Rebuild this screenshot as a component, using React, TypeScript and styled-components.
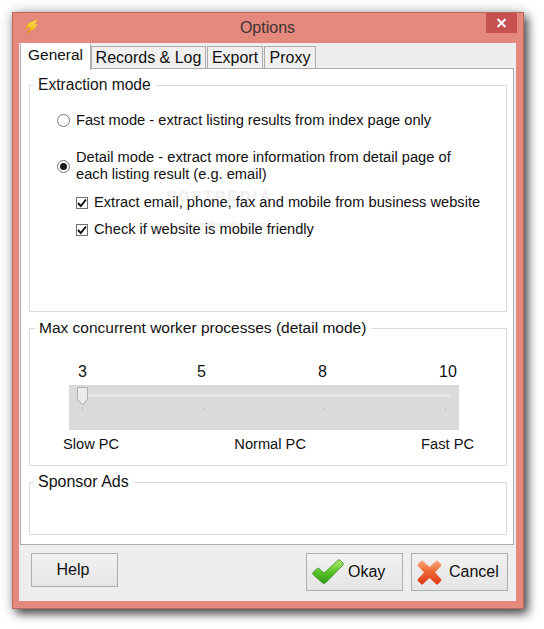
import React from 'react'
import styled, { createGlobalStyle } from 'styled-components'

const GlobalStyle = createGlobalStyle`
  html, body {
    margin: 0;
    padding: 0;
    background: #ffffff;
    overflow: hidden;
  }
  body {
    font-family: "Liberation Sans", Arial, sans-serif;
    font-size: 14.67px;
    color: #111111;
  }
`

const Desktop = styled.div`
  width: 544px;
  height: 629px;
  padding: 12px 0 0 12px;
  box-sizing: border-box;
`

const Window = styled.div`
  width: 512px;
  height: 597px;
  box-sizing: border-box;
  display: flex;
  flex-direction: column;
  padding: 0 7px 7px 6px;
  background: #e5887e;
  border: 1px solid #b9685f;
  box-shadow: 4px 5px 9px rgba(0, 0, 0, 0.65), 0 0 12px rgba(0, 0, 0, 0.25);
`

const TitleBar = styled.div`
  height: 30px;
  flex: none;
  display: grid;
  grid-template-columns: 1fr auto 1fr;
  align-items: start;
`

const AppIcon = styled.svg`
  width: 14px;
  height: 15px;
  margin: 6px 0 0 6px;
`

const Title = styled.div`
  font-size: 16px;
  line-height: 30px;
  color: #3f3431;
`

const CloseButton = styled.div`
  justify-self: end;
  width: 31px;
  height: 20px;
  margin-right: -1px;
  background: #c75050;
  display: flex;
  align-items: center;
  justify-content: center;
`

const Client = styled.div`
  flex: 1;
  min-height: 0;
  display: flex;
  flex-direction: column;
  background: #eeeeee;
  padding: 0 2px 0 1px;
`

const TabRow = styled.div`
  height: 26px;
  flex: none;
  display: flex;
  align-items: flex-end;
  position: relative;
  z-index: 1;
  margin-bottom: -1px;
`

const Tab = styled.div<{ $active?: boolean; $width: number }>`
  width: ${p => p.$width}px;
  box-sizing: border-box;
  height: ${p => (p.$active ? 27 : 23)}px;
  line-height: ${p => (p.$active ? 22 : 21)}px;
  font-size: ${p => (p.$active ? 15.4 : 16)}px;
  margin-right: ${p => (p.$active ? 0 : 1)}px;
  margin-bottom: ${p => (p.$active ? -1 : 0)}px;
  text-align: center;
  border: 1px solid #acacac;
  border-bottom: ${p => (p.$active ? 'none' : '1px solid #acacac')};
  border-top-color: ${p => (p.$active ? '#ffffff' : '#acacac')};
  background: ${p => (p.$active ? '#ffffff' : '#f0f0f0')};
`

const Pane = styled.div`
  height: 477px;
  flex: none;
  box-sizing: border-box;
  position: relative;
  background: #ffffff;
  border: 1px solid #acacac;
  padding: 7px 6px 8px 8px;
  display: flex;
  flex-direction: column;
  gap: 7px;
`

const Group = styled.fieldset<{ $height: number }>`
  height: ${p => p.$height}px;
  flex: none;
  box-sizing: border-box;
  position: relative;
  z-index: 1;
  margin: 0;
  min-width: 0;
  padding: 0;
  border: 1px solid #dcdcdc;
`

const GroupTitle = styled.legend<{ $size: number; $shift: number }>`
  margin-left: ${p => p.$shift}px;
  padding: 0 5px 0 4px;
  font-size: ${p => p.$size}px;
  line-height: 18px;
`

const ModeList = styled.div`
  display: flex;
  flex-direction: column;
  padding: 18px 0 0 27px;
`

const RadioRow = styled.div<{ $gap: number }>`
  display: flex;
  align-items: center;
  gap: 6px;
  line-height: 17px;
  margin-bottom: ${p => p.$gap}px;
`

const Radio = styled.span<{ $on?: boolean }>`
  width: 13px;
  height: 13px;
  box-sizing: border-box;
  flex: none;
  border-radius: 50%;
  border: 1px solid #757575;
  background: #ffffff;
  display: flex;
  align-items: center;
  justify-content: center;
  &::after {
    content: '';
    display: ${p => (p.$on ? 'block' : 'none')};
    width: 7px;
    height: 7px;
    border-radius: 50%;
    background: #1a1a1a;
  }
`

const CheckRow = styled.div<{ $gap: number }>`
  display: flex;
  align-items: center;
  gap: 6px;
  line-height: 17px;
  margin: 0 0 ${p => p.$gap}px 19px;
`

const CheckBox = styled.span`
  width: 12px;
  height: 12px;
  box-sizing: border-box;
  flex: none;
  border: 1px solid #707070;
  background: #ffffff;
  display: flex;
  align-items: center;
  justify-content: center;
`

const SliderArea = styled.div`
  display: flex;
  flex-direction: column;
  padding: 26px 32px 0 33px;
`

const NumberRow = styled.div`
  display: grid;
  grid-template-columns: 119px 121px 121px auto;
  padding-left: 15px;
  font-size: 16px;
  line-height: 18px;
`

const SliderBar = styled.div`
  position: relative;
  height: 45px;
  width: 390px;
  margin: 4px 0 5px 6px;
  box-sizing: border-box;
  padding: 9px 8px 0 9px;
  background: #dadada;
`

const Track = styled.div`
  height: 3px;
  background: #e8e8e8;
  border-top: 1px solid #e2e2e2;
  box-sizing: border-box;
`

const TickRow = styled.div`
  display: flex;
  justify-content: space-between;
  padding: 10px 5px 0 4px;
`

const Tick = styled.span`
  width: 1px;
  height: 3px;
  background: #bdbdbd;
`

const Thumb = styled.svg`
  position: absolute;
  left: 8px;
  top: 2px;
  width: 11px;
  height: 19px;
`

const SpeedRow = styled.div`
  display: flex;
  justify-content: space-between;
  line-height: 18px;
  width: 411px;
`

const Footer = styled.div`
  flex: 1;
  display: flex;
  align-items: flex-start;
  gap: 8px;
  padding: 8px 6px 0 11px;
`

const HelpButton = styled.div`
  width: 87px;
  height: 34px;
  box-sizing: border-box;
  padding-right: 3px;
  border: 1px solid #adadad;
  background: linear-gradient(#f1f1f1, #e5e5e5);
  font-size: 16px;
  display: flex;
  align-items: center;
  justify-content: center;
`

const IconButton = styled.div<{ $gap: number }>`
  width: 97px;
  height: 38px;
  box-sizing: border-box;
  padding-left: 5px;
  border: 1px solid #adadad;
  background: linear-gradient(#f1f1f1, #e5e5e5);
  font-size: 16px;
  display: flex;
  align-items: center;
  gap: ${p => p.$gap}px;
`

const Spacer = styled.div`
  flex: 1;
`

const Watermark = styled.div`
  position: absolute;
  left: 131px;
  top: 116px;
  display: flex;
  flex-direction: column;
  align-items: center;
  width: 135px;
  color: #eeeeee;
  z-index: 0;
  pointer-events: none;
`

const WatermarkBrand = styled.span`
  font-size: 14px;
  font-weight: bold;
  letter-spacing: 3px;
  line-height: 22px;
`

const WatermarkUrl = styled.span`
  font-size: 11px;
  margin-top: 12px;
`

const Bolt = () => (
  <AppIcon viewBox="0 0 14 15">
    <defs>
      <linearGradient id="bolt" x1="0.8" y1="0" x2="0.2" y2="1">
        <stop offset="0" stopColor="#ffe75a" />
        <stop offset="0.55" stopColor="#f9c52c" />
        <stop offset="1" stopColor="#d97a1a" />
      </linearGradient>
    </defs>
    <path d="M13.5 0 L3.5 4 L0.5 9.5 L5.5 8.5 L0.5 15 L10 9.5 L13 4.5 L9 5.5 Z" fill="url(#bolt)" stroke="#e09a30" strokeWidth="0.4" />
  </AppIcon>
)

const CheckMark = () => (
  <svg width="10" height="10" viewBox="0 0 10 10">
    <path d="M1 5 L3.8 8 L9 1.5" fill="none" stroke="#111" strokeWidth="2" />
  </svg>
)

const OkIcon = () => (
  <svg width="32" height="26" viewBox="0 0 32 26">
    <defs>
      <linearGradient id="okFill" x1="0" y1="0" x2="0" y2="1">
        <stop offset="0" stopColor="#b5ea6c" />
        <stop offset="0.5" stopColor="#5cc62c" />
        <stop offset="1" stopColor="#2f9a12" />
      </linearGradient>
    </defs>
    <path
      d="M1 13.5 L5 9.5 Q6 8.8 7 9.5 L12 14 L26 1.2 Q27 0.5 28 1.2 L31 4 Q31.7 5 31 6 L14 23.5 Q12 25.5 10 23.5 L1 15.5 Q0.3 14.5 1 13.5 Z"
      fill="url(#okFill)"
      stroke="#3b8f22"
      strokeWidth="0.8"
    />
  </svg>
)

const CancelIcon = () => (
  <svg width="25" height="25" viewBox="0 0 25 25">
    <defs>
      <linearGradient id="xFill" x1="0" y1="0" x2="0" y2="1">
        <stop offset="0" stopColor="#f9a77c" />
        <stop offset="0.45" stopColor="#ee6a35" />
        <stop offset="1" stopColor="#e03412" />
      </linearGradient>
    </defs>
    <path
      d="M1 4 L4 1 Q5 0 6 1 L12.5 7 L19 1 Q20 0 21 1 L24 4 Q25 5 24 6 L18 12.5 L24 19 Q25 20 24 21 L21 24 Q20 25 19 24 L12.5 18 L6 24 Q5 25 4 24 L1 21 Q0 20 1 19 L7 12.5 L1 6 Q0 5 1 4 Z"
      fill="url(#xFill)"
    />
  </svg>
)

const App = () => {
  return (
    <Desktop>
      <GlobalStyle />
      <Window>
        <TitleBar>
          <Bolt />
          <Title>Options</Title>
          <CloseButton>
            <svg width="11" height="10" viewBox="0 0 11 10">
              <path d="M1.5 1 L9.5 9 M9.5 1 L1.5 9" stroke="#fff" strokeWidth="2" />
            </svg>
          </CloseButton>
        </TitleBar>
        <Client>
          <TabRow>
            <Tab $active $width={71}>General</Tab>
            <Tab $width={115}>Records &amp; Log</Tab>
            <Tab $width={56}>Export</Tab>
            <Tab $width={52}>Proxy</Tab>
          </TabRow>
          <Pane>
            <Watermark>
              <WatermarkBrand>SOFTPEDIA</WatermarkBrand>
              <WatermarkUrl>www.softpedia.com</WatermarkUrl>
            </Watermark>
            <Group $height={236}>
              <GroupTitle $size={15.6} $shift={4}>Extraction mode</GroupTitle>
              <ModeList>
                <RadioRow $gap={20}>
                  <Radio />
                  <span>Fast mode - extract listing results from index page only</span>
                </RadioRow>
                <RadioRow $gap={11}>
                  <Radio $on />
                  <span>
                    Detail mode - extract more information from detail page of
                    <br />
                    each listing result (e.g. email)
                  </span>
                </RadioRow>
                <CheckRow $gap={10}>
                  <CheckBox><CheckMark /></CheckBox>
                  <span>Extract email, phone, fax and mobile from business website</span>
                </CheckRow>
                <CheckRow $gap={0}>
                  <CheckBox><CheckMark /></CheckBox>
                  <span>Check if website is mobile friendly</span>
                </CheckRow>
              </ModeList>
            </Group>
            <Group $height={147}>
              <GroupTitle $size={15.5} $shift={5}>Max concurrent worker processes (detail mode)</GroupTitle>
              <SliderArea>
                <NumberRow>
                  <span>3</span>
                  <span>5</span>
                  <span>8</span>
                  <span>10</span>
                </NumberRow>
                <SliderBar>
                  <Track />
                  <TickRow>
                    <Tick />
                    <Tick />
                    <Tick />
                    <Tick />
                  </TickRow>
                  <Thumb viewBox="0 0 11 19">
                    <path d="M0.5 0.5 H10.5 V12 L5.5 18 L0.5 12 Z" fill="#ececec" stroke="#b0b0b0" />
                  </Thumb>
                </SliderBar>
                <SpeedRow>
                  <span>Slow PC</span>
                  <span>Normal PC</span>
                  <span>Fast PC</span>
                </SpeedRow>
              </SliderArea>
            </Group>
            <Group $height={62}>
              <GroupTitle $size={16} $shift={4}>Sponsor Ads</GroupTitle>
            </Group>
          </Pane>
          <Footer>
            <HelpButton>Help</HelpButton>
            <Spacer />
            <IconButton $gap={4}><OkIcon />Okay</IconButton>
            <IconButton $gap={7}><CancelIcon />Cancel</IconButton>
          </Footer>
        </Client>
      </Window>
    </Desktop>
  )
}

export default App
